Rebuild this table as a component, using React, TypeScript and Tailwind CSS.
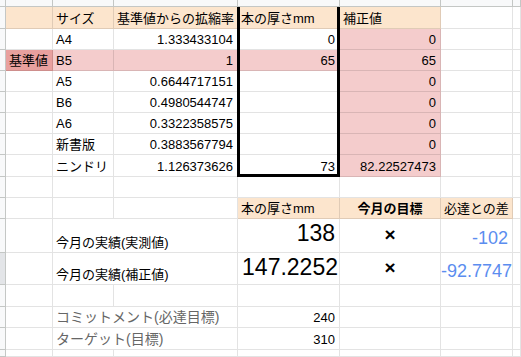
import React from "react";

type Cell = {
  v?: React.ReactNode;
  bg?: string;
  al?: "l" | "r" | "c";
  va?: "end" | "center";
  x?: string;
  span?: boolean;
};

const alCls = { l: "justify-start pl-[3px]", r: "justify-end pr-[4px]", c: "justify-center" };
const vaCls = { end: "items-end pb-[2px]", center: "items-center" };

const PEACH = "bg-[#fce5cd]";
const PINK = "bg-[#f4cccc]";

function SheetCell({ c }: { c: Cell }) {
  const al = c.al ?? "l";
  const va = c.va ?? "end";
  return (
    <div
      className={`flex whitespace-nowrap border-b border-r border-[rgba(0,0,0,0.11)] ${c.bg ?? "bg-white"} ${alCls[al]} ${
        c.x && c.x.includes("pb-") ? (va === "end" ? "items-end" : "items-center") : vaCls[va]
      } ${c.span ? "col-span-2" : ""} ${c.x ?? ""}`}
    >
      {c.v}
    </div>
  );
}

function RowHead({ dark }: { dark?: boolean }) {
  return <div className={`border-b border-r border-[#c4c7c5] ${dark ? "bg-[#e3e5e8]" : "bg-[#f8f9fa]"}`} />;
}

const e = (bg?: string): Cell => ({ bg });

const rows: { cells: Cell[]; dark?: boolean }[] = [
  {
    cells: [
      e(PEACH),
      { v: "サイズ", bg: PEACH },
      { v: "基準値からの拡縮率", bg: PEACH },
      { v: "本の厚さmm", bg: PEACH },
      { v: "補正値", bg: PEACH },
      e(),
      e(),
    ],
  },
  {
    cells: [e(), { v: "A4" }, { v: "1.333433104", al: "r" }, { v: "0", al: "r" }, { v: "0", al: "r", bg: PINK }, e(), e()],
  },
  {
    cells: [
      { v: "基準値", bg: "bg-[#e8a09e]" },
      { v: "B5", bg: PINK },
      { v: "1", al: "r", bg: PINK },
      { v: "65", al: "r", bg: PINK },
      { v: "65", al: "r", bg: PINK },
      e(),
      e(),
    ],
  },
  { cells: [e(), { v: "A5" }, { v: "0.6644717151", al: "r" }, e(), { v: "0", al: "r", bg: PINK }, e(), e()] },
  { cells: [e(), { v: "B6" }, { v: "0.4980544747", al: "r" }, e(), { v: "0", al: "r", bg: PINK }, e(), e()] },
  { cells: [e(), { v: "A6" }, { v: "0.3322358575", al: "r" }, e(), { v: "0", al: "r", bg: PINK }, e(), e()] },
  { cells: [e(), { v: "新書版" }, { v: "0.3883567794", al: "r" }, e(), { v: "0", al: "r", bg: PINK }, e(), e()] },
  {
    cells: [
      e(),
      { v: "ニンドリ" },
      { v: "1.126373626", al: "r" },
      { v: "73", al: "r" },
      { v: "82.22527473", al: "r", bg: PINK },
      e(),
      e(),
    ],
  },
  { cells: [e(), e(), e(), e(), e(), e(), e()] },
  {
    cells: [
      e(),
      e(),
      e(),
      { v: "本の厚さmm", bg: PEACH },
      { v: "今月の目標", bg: PEACH, al: "c", x: "font-bold" },
      { v: "必達との差", bg: PEACH },
      e(),
    ],
  },
  {
    cells: [
      e(),
      { v: "今月の実績(実測値)", span: true },
      { v: "138", al: "r", x: "text-[23px] leading-[26px] pb-[6px]" },
      { v: "×", al: "c", va: "center", x: "text-[19px] font-bold leading-[20px] pb-[2px]" },
      { v: "-102", al: "r", x: "text-[18px] leading-[21px] text-[#5b8def] pb-[3px]" },
      e(),
    ],
  },
  {
    dark: true,
    cells: [
      e(),
      { v: "今月の実績(補正値)", span: true },
      { v: "147.2252", al: "r", x: "text-[23px] leading-[26px] pb-[4px] !pr-[1px]" },
      { v: "×", al: "c", va: "center", x: "text-[19px] font-bold leading-[20px] pb-[2px]" },
      { v: "-92.7747", al: "r", x: "text-[18px] leading-[21px] text-[#5b8def] pb-[2px] !pr-0" },
      e(),
    ],
  },
  { cells: [e(), e(), e(), e(), e(), e(), e()] },
  {
    cells: [
      e(),
      { v: "コミットメント(必達目標)", span: true, x: "text-[14px] text-[#666666]" },
      { v: "240", al: "r" },
      e(),
      e(),
      e(),
    ],
  },
  {
    cells: [
      e(),
      { v: "ターゲット(目標)", span: true, x: "text-[14px] text-[#666666]" },
      { v: "310", al: "r" },
      e(),
      e(),
      e(),
    ],
  },
  { cells: [e(), e(), e(), e(), e(), e(), e()] },
];

export default function App() {
  return (
    <div className="relative h-[357px] w-[521px] overflow-hidden bg-white font-['Liberation_Sans','Noto_Sans_CJK_JP',sans-serif] text-[13px] leading-[15px] text-black">
      <div className="grid h-full w-full grid-cols-[6px_47px_61px_124px_102px_101px_72px_1fr] grid-rows-[7px_22px_21px_21px_21px_21px_21px_21px_22px_21px_21px_34px_32px_22px_21px_22px_1fr]">
        {/* column header strip */}
        {Array.from({ length: 8 }).map((_, i) => (
          <div key={`h${i}`} className="border-b border-r border-[#c4c7c5] bg-[#f8f9fa]" />
        ))}
        {rows.map((r, ri) => (
          <React.Fragment key={ri}>
            <RowHead dark={r.dark} />
            {r.cells.map((c, ci) => (
              <SheetCell key={ci} c={c} />
            ))}
          </React.Fragment>
        ))}
      </div>
      {/* thick selection-style border around column D */}
      <div className="pointer-events-none absolute left-[237px] top-[7px] h-[170px] w-[103px] border-x-[3px] border-b-[3px] border-black" />
    </div>
  );
}
